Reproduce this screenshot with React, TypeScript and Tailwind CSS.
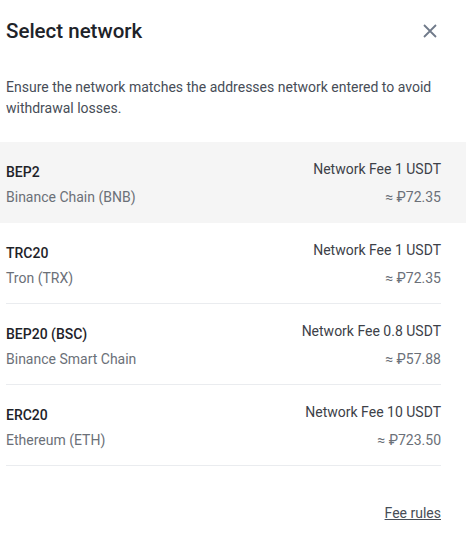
import React from "react";

const rows = [
  { name: "BEP2", chain: "Binance Chain (BNB)", fee: "Network Fee 1 USDT", price: "≈ ₽72.35", active: true },
  { name: "TRC20", chain: "Tron (TRX)", fee: "Network Fee 1 USDT", price: "≈ ₽72.35" },
  { name: "BEP20 (BSC)", chain: "Binance Smart Chain", fee: "Network Fee 0.8 USDT", price: "≈ ₽57.88" },
  { name: "ERC20", chain: "Ethereum (ETH)", fee: "Network Fee 10 USDT", price: "≈ ₽723.50" },
];

export default function App() {
  return (
    <div
      className="w-[466px] h-[547px] bg-white overflow-hidden"
      style={{ fontFamily: 'Roboto, "Noto Sans", sans-serif' }}
    >
      <div className="flex items-center justify-between pl-[6px] pr-[25px] pt-[18px] h-[44px]">
        <div className="text-[20.5px] leading-[26px] font-medium text-[#1e2329]">Select network</div>
        <svg width="16" height="16" viewBox="0 0 16 16" className="mr-[3px]">
          <path d="M2 2L14 14M14 2L2 14" stroke="#707a8a" strokeWidth="1.8" fill="none" />
        </svg>
      </div>
      <div className="pl-[6px] pr-[25px] pt-[33px] pb-[23px] text-[14px] leading-[21px] text-[#474d57]">
        Ensure the network matches the addresses network entered to avoid withdrawal losses.
      </div>
      <div>
        {rows.map((r, i) => (
          <div key={i} className={r.active ? "bg-[#f5f5f5]" : ""}>
            <div className="ml-[6px] mr-[25px] flex justify-between py-[17px] h-[81px] border-b border-[#eaecef] box-border"
              style={r.active ? { borderColor: "transparent" } : undefined}>
              <div className="flex flex-col">
                <div className="mt-[3px] text-[14px] leading-[20px] font-medium text-[#1e2329]">{r.name}</div>
                <div className="mt-[5px] text-[14px] leading-[20px] text-[#6b7078]">{r.chain}</div>
              </div>
              <div className="flex flex-col items-end">
                <div className="text-[14px] leading-[20px] text-[#3d4148]">{r.fee}</div>
                <div className="mt-[8px] text-[14px] leading-[20px] text-[#6b7078]">{r.price}</div>
              </div>
            </div>
          </div>
        ))}
      </div>
      <div className="flex justify-end pr-[25px] pt-[37px]">
        <span className="text-[14px] leading-[20px] text-[#474d57] underline">Fee rules</span>
      </div>
    </div>
  );
}
